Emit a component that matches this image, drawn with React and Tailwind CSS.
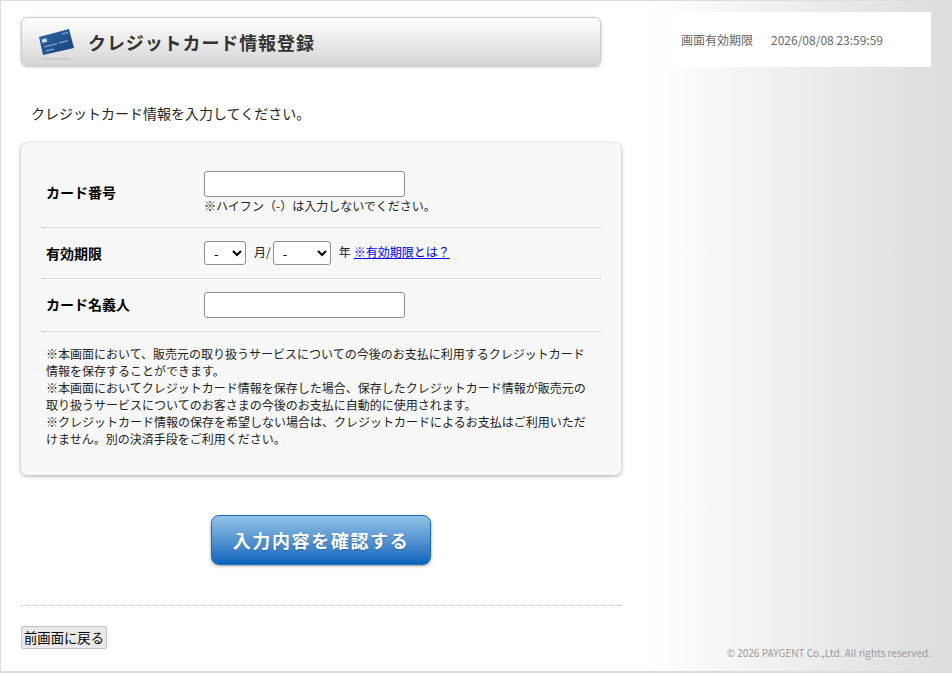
import React from "react";

const CardIcon = () => (
  <svg width="40" height="36" viewBox="0 0 40 36" className="shrink-0">
    <defs>
      <linearGradient id="cardFill" x1="0" y1="0" x2="1" y2="1">
        <stop offset="0" stopColor="#2c6aa8" />
        <stop offset="1" stopColor="#173f78" />
      </linearGradient>
    </defs>
    <polygon points="1,13 31,5 36,24 5,31" fill="url(#cardFill)" />
    <rect x="4" y="15" width="5" height="3.5" fill="#cfd8e4" transform="rotate(-14 6 17)" />
    <path d="M6 23 L19 19.6 M8 27 L16 25 M21 19 L30 16.6 M24 10 L30 8.5" stroke="#b4c7df" strokeWidth="0.9" />
    <path d="M5 35 H32" stroke="#bcbcbc" strokeWidth="1" />
  </svg>
);

const Row = ({ label, children, className }) => (
  <div className={`flex border-b border-dotted border-[#c4c4c4] ${className}`}>
    <div className="w-[163px] pl-[5px] text-[14px] leading-[20px] font-bold text-black">{label}</div>
    <div className="flex-1">{children}</div>
  </div>
);

const textInput = "block w-[201px] h-[26px] bg-white border border-[#8f8f8f] rounded-[3px]";
const selectBox = "h-[24px] bg-white border border-[#8f8f8f] rounded-[3px] text-[13px] text-black pl-[5px]";

export default function App() {
  return (
    <div
      className="flex w-[952px] h-[673px] overflow-hidden border border-b-2 border-[#dddddd] bg-gradient-to-r from-white from-[68%] to-[#dcdcdc]"
      style={{ fontFamily: '"Noto Sans CJK JP", "Noto Sans", sans-serif' }}
    >
      <main className="w-[650px] pl-[20px] pt-[16px] shrink-0">
        <div className="flex items-center w-[580px] h-[49px] pl-[16px] rounded-[6px] border border-[#cccccc] bg-gradient-to-b from-white to-[#d6d6d6] shadow-[0_1px_3px_rgba(0,0,0,0.25)]">
          <CardIcon />
          <h1 className="ml-[10px] pt-[2px] text-[18px] font-bold tracking-[0.05em] text-[#333333]">クレジットカード情報登録</h1>
        </div>

        <p className="mt-[37px] ml-[10px] text-[14px] leading-[20px] text-[#222222]">クレジットカード情報を入力してください。</p>

        <section className="mt-[20px] w-[600px] h-[332px] px-[20px] pt-[28px] rounded-[6px] bg-[#f8f8f8] shadow-[0_1px_4px_rgba(0,0,0,0.35)]">
          <Row label={<div className="mt-[11px]">カード番号</div>} className="h-[57px]">
            <input type="text" className={textInput} />
            <p className="text-[12px] leading-[16px] mt-[1px] text-[#222222]">※ハイフン（-）は入力しないでください。</p>
          </Row>
          <Row label={<div className="mt-[15px]">有効期限</div>} className="h-[51px]">
            <div className="flex items-center pt-[13px] text-[12px] text-[#222222]">
              <select className={`${selectBox} w-[42px]`}><option>-</option></select>
              <span className="ml-[8px] mb-[2px]">月/</span>
              <select className={`${selectBox} w-[58px] ml-[2px]`}><option>-</option></select>
              <span className="ml-[8px] mb-[2px]">年</span>
              <a href="#" className="ml-[3px] mb-[2px] text-[#0000ee] underline">※有効期限とは？</a>
            </div>
          </Row>
          <Row label={<div className="mt-[15px]">カード名義人</div>} className="h-[53px]">
            <div className="pt-[13px]"><input type="text" className={textInput} /></div>
          </Row>
          <p className="mt-[13px] px-[5px] text-[12px] leading-[17px] text-[#222222]">
            ※本画面において、販売元の取り扱うサービスについての今後のお支払に利用するクレジットカード情報を保存することができます。<br />
            ※本画面においてクレジットカード情報を保存した場合、保存したクレジットカード情報が販売元の取り扱うサービスについてのお客さまの今後のお支払に自動的に使用されます。<br />
            ※クレジットカード情報の保存を希望しない場合は、クレジットカードによるお支払はご利用いただけません。別の決済手段をご利用ください。
          </p>
        </section>

        <div className="w-[600px] mt-[40px] flex justify-center">
          <button className="w-[220px] h-[50px] rounded-[8px] border border-[#1a6fbb] bg-gradient-to-b from-[#93c4e6] to-[#0564bb] text-white text-[18px] font-bold tracking-[0.09em] shadow-[0_1px_3px_rgba(0,0,0,0.4)] [text-shadow:0_1px_1px_rgba(0,0,0,0.25)]">
            入力内容を確認する
          </button>
        </div>

        <div className="w-[600px] mt-[40px] border-t border-dotted border-[#c4c4c4]" />

        <button className="block mt-[20px] h-[23px] w-[86px] rounded-[2px] border border-[#c4c4c4] bg-[#e9e9e9] text-[13.33px] leading-[20px] text-black">
          前画面に戻る
        </button>
      </main>

      <aside className="flex-1 flex flex-col pt-[11px] pr-[20px] pl-[20px] pb-[11px]">
        <div className="flex items-center h-[55px] pl-[10px] bg-white text-[12px] text-[#666666]">
          <span>画面有効期限</span>
          <span className="ml-[18px]">2026/08/08 23:59:59</span>
        </div>
        <p className="mt-auto text-right text-[10px] text-[#999999] whitespace-nowrap">© 2026 PAYGENT Co.,Ltd. All rights reserved.</p>
      </aside>
    </div>
  );
}
